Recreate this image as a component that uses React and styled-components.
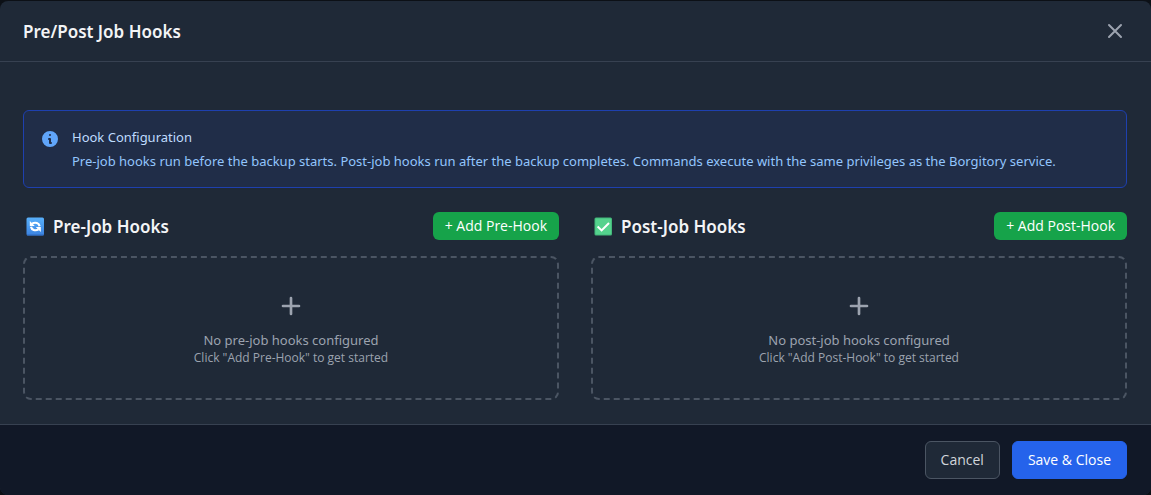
import React from "react";
import styled, { createGlobalStyle } from "styled-components";

const buttonFont = '"Segoe UI", "Open Sans", sans-serif';

const GlobalStyle = createGlobalStyle`
  *, *::before, *::after { box-sizing: border-box; }
  body { margin: 0; background: #0c1016; }
  h2, h3, p { margin: 0; }
  body {
    font-family: "Segoe UI", "Noto Sans", "Open Sans", sans-serif;
    font-size: 13px;
    line-height: 20px;
  }
  button {
    font-family: ${buttonFont};
    font-size: 14px;
    line-height: 20px;
  }
`;

const Backdrop = styled.div`
  min-height: 100vh;
  padding-top: 1px;
  background: #0c1016;
`;

const Dialog = styled.section`
  overflow: hidden;
  border-radius: 8px;
  background: #1f2937;
  color: #f3f4f6;
`;

const Header = styled.header`
  display: flex;
  align-items: center;
  justify-content: space-between;
  height: 61px;
  padding: 0 24px 0 23px;
  border-bottom: 1px solid #374151;
`;

const Title = styled.h2`
  padding-top: 2px;
  font-size: 17px;
  font-weight: 600;
  line-height: 26px;
`;

const CloseButton = styled.button`
  display: flex;
  padding: 0;
  border: 0;
  background: none;
  color: #9ca3af;
  cursor: pointer;
`;

const LineIcon = styled.svg`
  display: block;
  width: ${(p) => p.$size}px;
  height: ${(p) => p.$size}px;
  fill: none;
  stroke: currentColor;
  stroke-width: 2;
  stroke-linecap: round;
  stroke-linejoin: round;
`;

const Body = styled.div`
  padding: 48px 24px 24px 23px;
`;

const Notice = styled.div`
  display: flex;
  gap: 12px;
  margin-bottom: 24px;
  padding: 16px;
  border: 1px solid #1e40af;
  border-radius: 6px;
  background: #202d48;
`;

const InfoIcon = styled.svg`
  flex: none;
  width: 20px;
  height: 20px;
  margin-top: 2px;
  fill: #60a5fa;
`;

const NoticeText = styled.div`
  display: grid;
  gap: 4px;
  color: #93c5fd;
`;

const NoticeTitle = styled.h3`
  color: #bfdbfe;
  font-size: 13px;
  font-weight: 400;
  line-height: 20px;
`;

const Columns = styled.div`
  display: grid;
  grid-template-columns: 1fr 1fr;
  gap: 32px;
`;

const ColumnHeader = styled.div`
  display: flex;
  align-items: center;
  justify-content: space-between;
  margin-bottom: 16px;
`;

const ColumnTitle = styled.h3`
  display: flex;
  align-items: center;
  gap: 6px;
  padding-top: 2px;
  font-size: 17px;
  font-weight: 600;
  line-height: 26px;
`;

const Emoji = styled.svg`
  width: 24px;
  height: 24px;
`;

const AddButton = styled.button`
  padding: 4px 12px;
  border: 0;
  border-radius: 6px;
  background: #16a34a;
  color: #fff;
  cursor: pointer;
`;

const EmptyState = styled.div`
  display: flex;
  flex-direction: column;
  align-items: center;
  padding: 32px;
  border: 2px dashed #4b5563;
  border-radius: 8px;
  color: #9ca3af;
  text-align: center;

  svg { margin-bottom: 8px; }
`;

const Hint = styled.p`
  font-family: ${buttonFont};
  font-size: 12px;
  line-height: 16px;
`;

const Footer = styled.footer`
  display: flex;
  justify-content: flex-end;
  gap: 12px;
  padding: 16px 24px;
  border-top: 1px solid #374151;
  background: #111827;
`;

const FooterButton = styled.button`
  padding: 8px 15px;
  border: 1px solid ${(p) => (p.$primary ? "#2563eb" : "#4b5563")};
  border-radius: 6px;
  background: ${(p) => (p.$primary ? "#2563eb" : "#1f2937")};
  color: ${(p) => (p.$primary ? "#fff" : "#d1d5db")};
  cursor: pointer;
`;

const CycleEmoji = () => (
  <Emoji viewBox="0 0 24 24" aria-hidden="true">
    <defs>
      <linearGradient id="cycle" x1="0" y1="0" x2="0" y2="1">
        <stop offset="0" stopColor="#58b0fb" />
        <stop offset="1" stopColor="#3b82e0" />
      </linearGradient>
    </defs>
    <rect x="3.5" y="2.5" width="17.5" height="18" rx="1.5" fill="url(#cycle)" />
    <path d="M4 20h16.5" stroke="#2f69bd" strokeWidth="1" />
    <g fill="none" stroke="#fff" strokeWidth="2.2">
      <path d="M9 8.6c3.4-1.8 7-.6 7.6 2.6" />
      <path d="M15.6 14.4c-3.4 1.8-7 .6-7.6-2.6" />
    </g>
    <path d="M6.8 6v5h5zM17.8 17v-5h-5z" fill="#fff" />
  </Emoji>
);

const CheckEmoji = () => (
  <Emoji viewBox="0 0 24 24" aria-hidden="true">
    <rect x="3.5" y="2.5" width="17.5" height="18" rx="1.5" fill="#43b87a" />
    <rect x="4.5" y="3.5" width="15.5" height="16" rx="1" fill="#55d28d" />
    <path d="M6.6 11.5l4 3.9 7.4-7.4" fill="none" stroke="#fff" strokeWidth="2" />
  </Emoji>
);

const HookColumn = ({ emoji, title, action, kind }) => (
  <section>
    <ColumnHeader>
      <ColumnTitle>{emoji}{title}</ColumnTitle>
      <AddButton type="button">+ {action}</AddButton>
    </ColumnHeader>
    <EmptyState>
      <LineIcon $size={32} viewBox="0 0 24 24" aria-hidden="true">
        <path d="M12 6v12M6 12h12" />
      </LineIcon>
      <p>No {kind} hooks configured</p>
      <Hint>Click "{action}" to get started</Hint>
    </EmptyState>
  </section>
);

export default function App() {
  return (
    <>
      <GlobalStyle />
      <Backdrop>
        <Dialog role="dialog" aria-labelledby="hooks-title">
          <Header>
            <Title id="hooks-title">Pre/Post Job Hooks</Title>
            <CloseButton type="button" aria-label="Close">
              <LineIcon $size={24} viewBox="0 0 24 24">
                <path d="M6 18L18 6M6 6l12 12" />
              </LineIcon>
            </CloseButton>
          </Header>
          <Body>
            <Notice>
              <InfoIcon viewBox="0 0 20 20" aria-hidden="true">
                <path
                  fillRule="evenodd"
                  clipRule="evenodd"
                  d="M18 10a8 8 0 11-16 0 8 8 0 0116 0zm-7-4a1 1 0 11-2 0 1 1 0 012 0zM9 9a1 1 0 000 2v3a1 1 0 001 1h1a1 1 0 100-2v-3a1 1 0 00-1-1H9z"
                />
              </InfoIcon>
              <NoticeText>
                <NoticeTitle>Hook Configuration</NoticeTitle>
                <p>
                  Pre-job hooks run before the backup starts. Post-job hooks run after the backup
                  completes. Commands execute with the same privileges as the Borgitory service.
                </p>
              </NoticeText>
            </Notice>
            <Columns>
              <HookColumn emoji={<CycleEmoji />} title="Pre-Job Hooks" action="Add Pre-Hook" kind="pre-job" />
              <HookColumn emoji={<CheckEmoji />} title="Post-Job Hooks" action="Add Post-Hook" kind="post-job" />
            </Columns>
          </Body>
          <Footer>
            <FooterButton type="button">Cancel</FooterButton>
            <FooterButton type="button" $primary>Save &amp; Close</FooterButton>
          </Footer>
        </Dialog>
      </Backdrop>
    </>
  );
}
